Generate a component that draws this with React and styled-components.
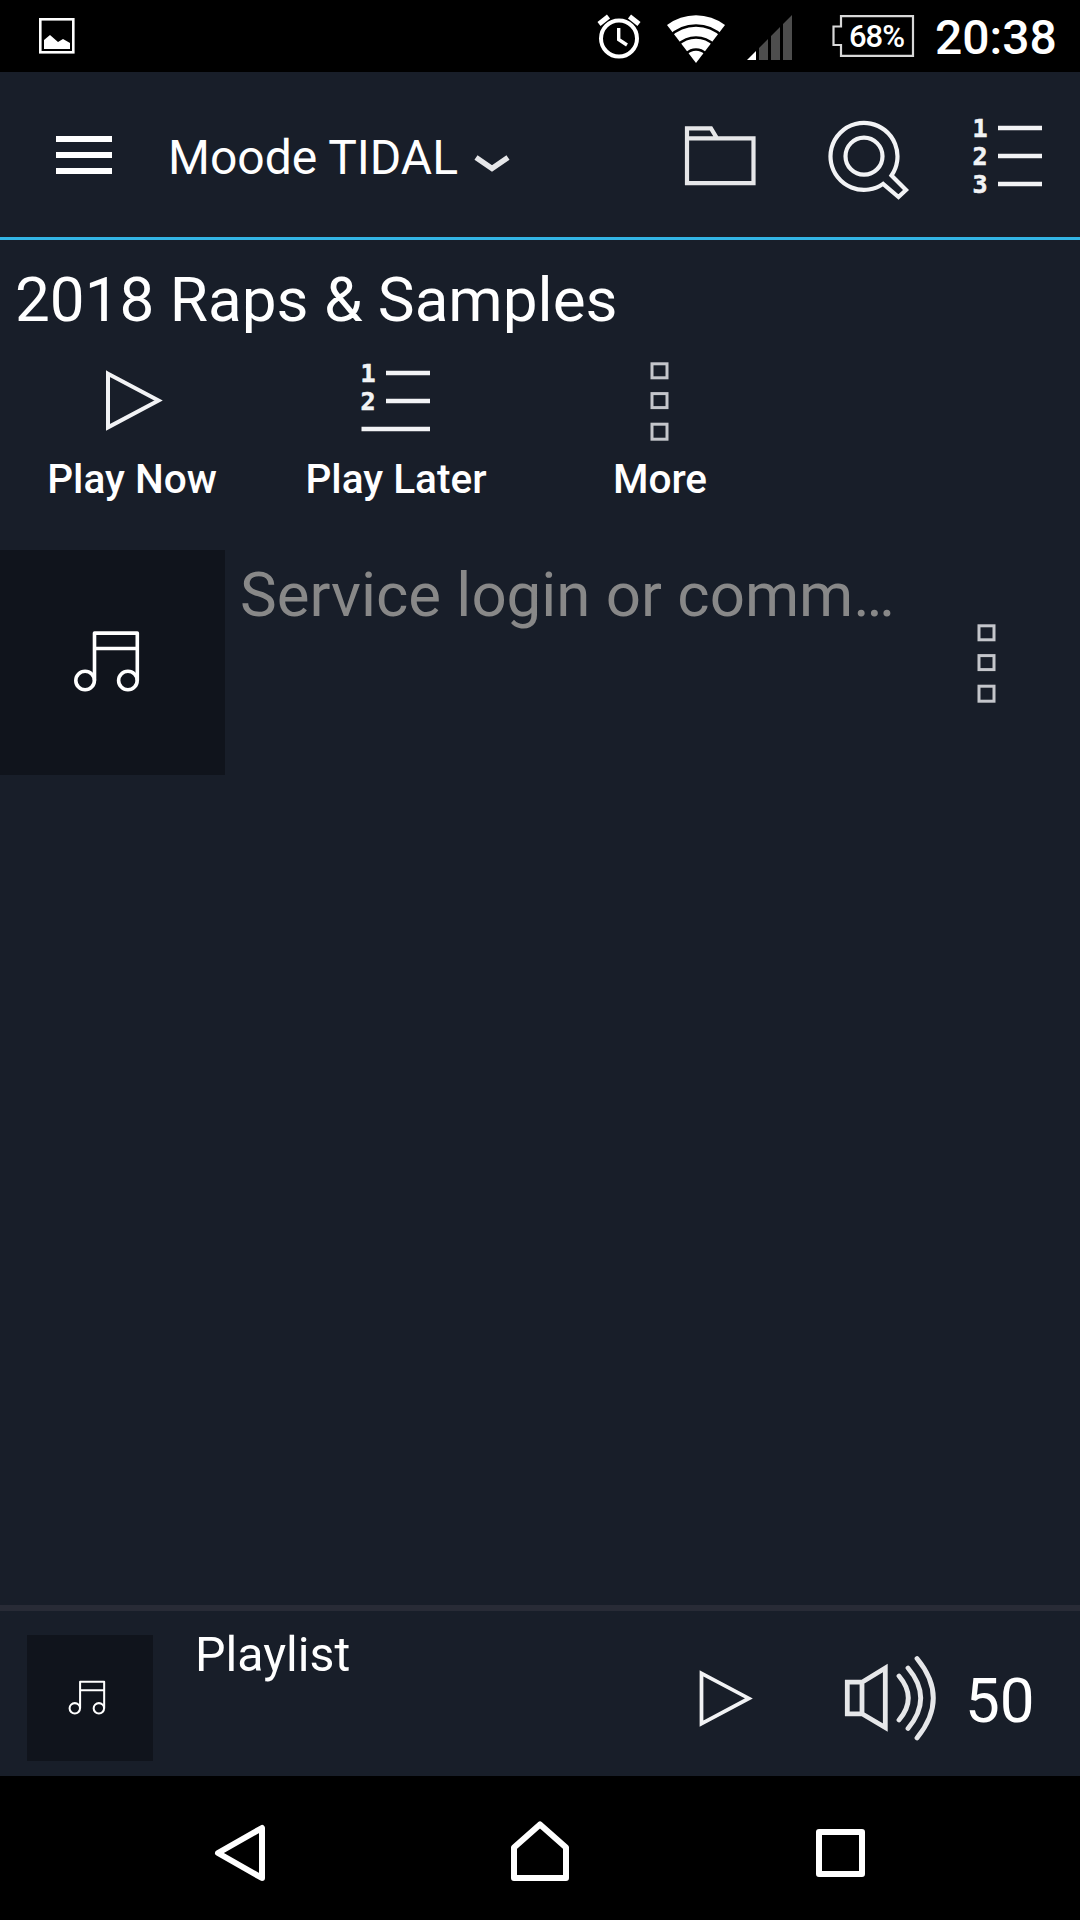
import React from "react";
import styled, { createGlobalStyle } from "styled-components";

const GlobalStyle = createGlobalStyle`
  * { box-sizing: border-box; }
  body {
    margin: 0;
    background: #181e29;
    color: #fff;
    font-family: Roboto, "Liberation Sans", sans-serif;
  }
`;

const Screen = styled.div`
  display: flex;
  flex-direction: column;
  width: 1080px;
  height: 1920px;
  overflow: hidden;
`;

const StatusBar = styled.div`
  display: flex;
  align-items: center;
  height: 72px;
  padding: 0 25px 0 36px;
  background: #000;
`;

const Spacer = styled.div`
  flex: 1;
`;

const Icon = styled.svg`
  display: block;
  flex: none;
  fill: none;
  stroke: ${(props) => props.$color || "#fff"};
  stroke-width: ${(props) => props.$line || 4};
  margin-left: ${(props) => props.$gap || 0}px;
`;

const Digit = styled.text`
  fill: #f2f3f5;
  stroke: #f2f3f5;
  stroke-width: 0.6;
  font: bold 25px "DejaVu Sans Mono", monospace;
`;

const Battery = styled.text`
  fill: #fff;
  stroke: none;
  font: 500 31px Roboto, sans-serif;
`;

const Clock = styled.div`
  width: 120px;
  margin-left: 19px;
  padding-top: 4px;
  font-size: 48px;
  font-weight: 500;
  line-height: 68px;
  white-space: nowrap;
`;

const Toolbar = styled.div`
  display: flex;
  align-items: center;
  height: 168px;
  padding: 1px 36px 0 56px;
  border-bottom: 3px solid #33b5e5;
`;

const MenuButton = styled.div`
  display: flex;
  flex-direction: column;
  gap: 10px;
  width: 56px;
  margin-right: 56px;
`;

const MenuLine = styled.div`
  height: 6px;
  background: #fff;
`;

const Source = styled.div`
  font-size: 48px;
  line-height: 56px;
  padding-top: 6px;
  white-space: nowrap;
`;

const Title = styled.div`
  height: 120px;
  padding: 24px 15px 0;
  font-size: 62px;
  line-height: 72px;
`;

const Actions = styled.div`
  display: flex;
  height: 190px;
`;

const Action = styled.div`
  display: flex;
  flex-direction: column;
  align-items: center;
  width: 264px;
  font-size: 40.6px;
  font-weight: 500;
  line-height: 48px;
`;

const ActionIcon = styled.div`
  display: flex;
  align-items: center;
  height: 80px;
  margin-bottom: 15px;
`;

const Row = styled.div`
  display: flex;
  height: 225px;
`;

const Cover = styled.div`
  display: flex;
  align-items: center;
  justify-content: center;
  flex: none;
  width: ${(props) => props.$size}px;
  height: ${(props) => props.$size}px;
  background: #10141c;
`;

const RowText = styled.div`
  width: 660px;
  margin-left: 15px;
  padding-top: 9px;
  color: #888;
  font-size: 61.8px;
  line-height: 72px;
  white-space: nowrap;
`;

const RowMore = styled.div`
  display: flex;
  align-items: center;
  padding: 0 0 2px 75px;
`;

const Player = styled.div`
  display: flex;
  height: 171px;
  padding: 24px 0 0 27px;
  border-top: 6px solid #282b36;
`;

const PlayerTitle = styled.div`
  width: 541px;
  padding-left: 42px;
  font-size: 48.3px;
  line-height: 40px;
`;

const Controls = styled.div`
  display: flex;
  align-items: center;
  height: 126px;
`;

const Volume = styled.div`
  margin-left: 27px;
  font-size: 62px;
  line-height: 72px;
  padding-top: 6px;
`;

const NavBar = styled.div`
  display: flex;
  align-items: center;
  height: 144px;
  padding-left: 210px;
  background: #000;
`;

const NoteIcon = ({ size }) => (
  <Icon width={size} height={size} viewBox="0 0 80 80" $line="3.6" strokeLinejoin="round">
    <path d="M21.5 57.5V10.1H64.3V57.5M21.5 25.5H64.3" />
    <circle cx="12.1" cy="57.5" r="9.3" />
    <circle cx="54.9" cy="57.5" r="9.3" />
  </Icon>
);

const PlayIcon = ({ width, height }) => (
  <Icon width={width} height={height} viewBox="0 0 64 66" $color="#f2f3f5">
    <path d="M8 6.7L58.5 33.5L8 60.3Z" />
  </Icon>
);

// queue icon, the last number is left out for "play later"
const ListIcon = ({ last, gap }) => (
  <Icon width="72" height="90" viewBox="0 -5 72 90" $line="4.6" $color="#f2f3f5" $gap={gap}>
    <Digit x="0.4" y="22">1</Digit>
    <Digit x="0.4" y="50">2</Digit>
    {last && <Digit x="0.4" y="78">3</Digit>}
    <path d={last ? "M26 13H70M26 41H70M26 69H70" : "M26 13H70M26 41H70M1.5 69H70"} />
  </Icon>
);

const MoreIcon = () => (
  <Icon width="24" height="84" viewBox="0 -2 24 84" $line="3" $color="#c4c6cb">
    <rect x="4" y="3.8" width="15" height="14" />
    <rect x="4" y="33.6" width="15" height="14" />
    <rect x="4" y="64.2" width="15" height="15" />
  </Icon>
);

const App = () => {
  return (
    <Screen>
      <GlobalStyle />
      <StatusBar>
        <Icon width="42" height="72" $line="2.6">
          <rect x="4.3" y="19.3" width="33" height="33" />
          <path d="M8 49V40L14 35L22 42L27 39L34 43V49Z" fill="#fff" stroke="none" />
        </Icon>
        <Spacer />
        <Icon width="48" height="72" $gap="-1">
          <circle cx="24" cy="38.5" r="18" />
          <path d="M23.7 28V39.5L32 45" strokeWidth="3.4" />
          <path d="M4 24L13.5 16.5M44 24L34.5 16.5" strokeWidth="5" />
        </Icon>
        <Icon width="60" height="72" $gap="23" $line="2.5" $color="#000">
          <path d="M1 25A48 48 0 0 1 59 25L30 63Z" fill="#fff" stroke="none" />
          <circle cx="30" cy="63" r="37.5" />
          <circle cx="30" cy="63" r="25.6" />
          <circle cx="30" cy="63" r="13.5" />
        </Icon>
        <Icon width="48" height="72" $gap="20">
          <path d="M1 60H10V51Z" fill="#fff" stroke="none" />
          <path d="M13 60H22V39L13 48ZM25 60H34V27L25 36ZM37 60H46V15L37 24Z" fill="#4d4d4d" stroke="none" />
        </Icon>
        <Icon width="84" height="72" $gap="38" $line="2.2" $color="#d8d8d8">
          <path d="M9 16.2H81V55.8H9V45H1.5V26.5H9Z" />
          <Battery x="17" y="46.5" textLength="56">68%</Battery>
        </Icon>
        <Clock>20:38</Clock>
      </StatusBar>

      <Toolbar>
        <MenuButton>
          <MenuLine />
          <MenuLine />
          <MenuLine />
        </MenuButton>
        <Source>Moode TIDAL</Source>
        <Icon width="40" height="80" $gap="14" $line="5.4" $color="#e6e7e9">
          <path d="M4 42.5L20 53.5L36 42.5" />
        </Icon>
        <Spacer />
        <Icon width="80" height="80" $line="4.2" $color="#e6e7e9">
          <path d="M7 13.4H31L37 23.3H73.5V68.2H7ZM7 23.3H37" />
        </Icon>
        <Icon width="84" height="92" $gap="68" $line="4.2" $color="#f2f3f5">
          <circle cx="36" cy="47.2" r="18.5" />
          <path d="M55.1 74.9A33.5 33.5 0 1 1 63.5 66.5L78 81L70.5 88Z" />
        </Icon>
        <ListIcon last gap={60} />
      </Toolbar>

      <Title>2018 Raps &amp; Samples</Title>
      <Actions>
        <Action>
          <ActionIcon>
            <PlayIcon width={64} height={66} />
          </ActionIcon>
          Play Now
        </Action>
        <Action>
          <ActionIcon>
            <ListIcon />
          </ActionIcon>
          Play Later
        </Action>
        <Action>
          <ActionIcon>
            <MoreIcon />
          </ActionIcon>
          More
        </Action>
      </Actions>

      <Row>
        <Cover $size={225}>
          <NoteIcon size={80} />
        </Cover>
        <RowText>Service login or comm…</RowText>
        <RowMore>
          <MoreIcon />
        </RowMore>
      </Row>

      <Spacer />

      <Player>
        <Cover $size={126}>
          <NoteIcon size={45} />
        </Cover>
        <PlayerTitle>Playlist</PlayerTitle>
        <Controls>
          <PlayIcon width={60} height={62} />
          <Icon width="96" height="92" $gap="88" $line="4.8" $color="#e6e7e9">
            <path d="M5.3 30.2H20V61.8H5.3ZM20 30.2L43.3 16V75.5L20 61.8" />
            <path d="M57 24Q75.6 46 57 68M66 16Q91.4 46 66 76.5M75 6.5Q107.6 46 75 86" strokeLinecap="round" />
          </Icon>
          <Volume>50</Volume>
        </Controls>
      </Player>

      <NavBar>
        <Icon width="60" height="72" $line="6" strokeLinejoin="round">
          <path d="M52 16V66L8 41Z" />
        </Icon>
        <Icon width="72" height="72" $gap="234" $line="6" strokeLinejoin="round">
          <path d="M10 66V35.5L36 12.5L62 35.5V66Z" />
        </Icon>
        <Icon width="60" height="72" $gap="234" $line="6" strokeLinejoin="round">
          <rect x="9" y="20" width="43" height="42" />
        </Icon>
      </NavBar>
    </Screen>
  );
};
export default App;
